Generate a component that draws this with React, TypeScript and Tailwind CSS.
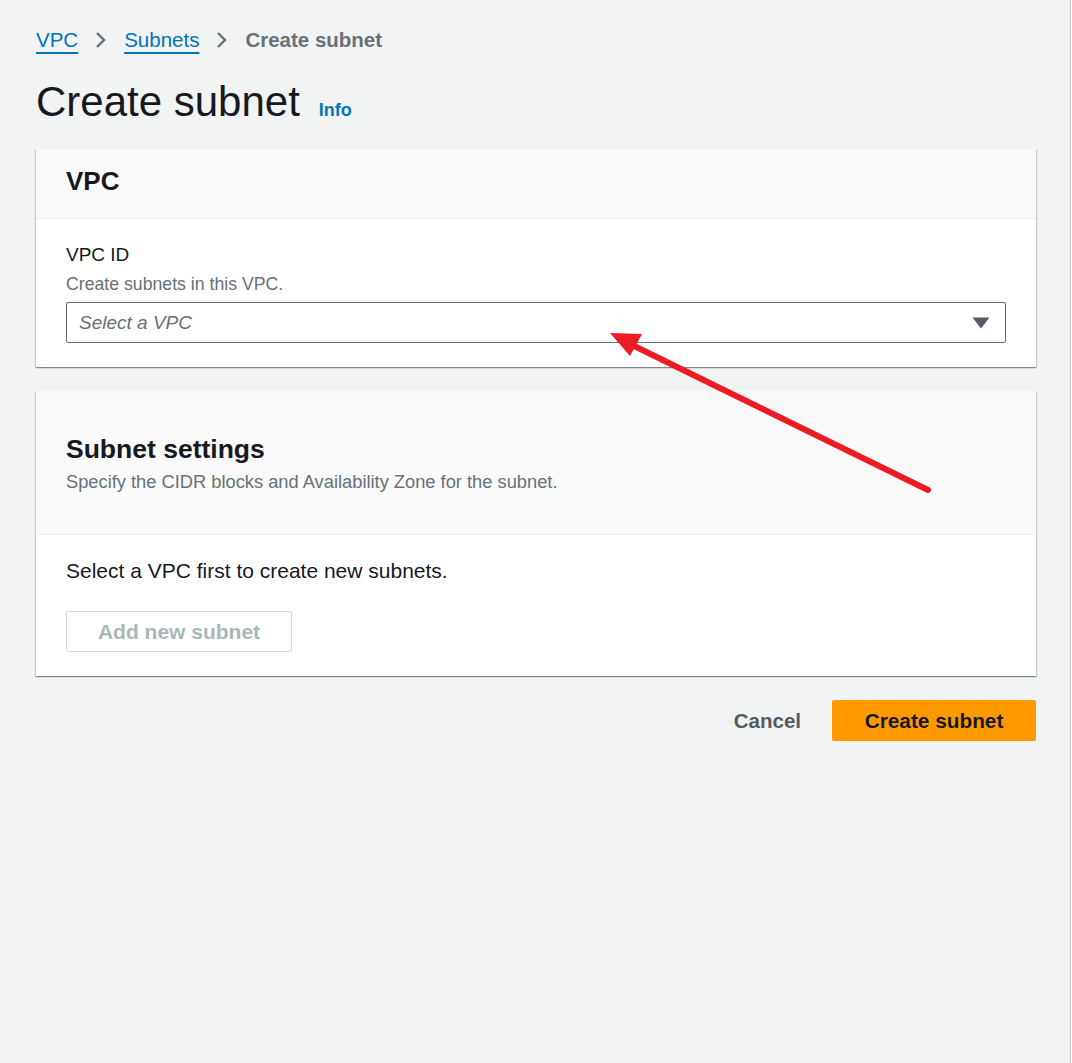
import React from 'react'

const panelShadow =
  'shadow-[0_1px_1px_0_rgba(0,28,36,0.3),1px_1px_1px_0_rgba(0,28,36,0.15),-1px_1px_1px_0_rgba(0,28,36,0.15)]'

function Chevron() {
  return (
    <svg width="12" height="18" viewBox="0 0 12 18" className="mx-[17px] shrink-0">
      <path d="M2 2l7 7-7 7" fill="none" stroke="#687078" strokeWidth="2.4" />
    </svg>
  )
}

export default function App() {
  return (
    <div className="relative min-h-[1063px] w-full bg-white font-['Liberation_Sans',Arial,sans-serif] text-[#16191f]">
      <div className="min-h-[1063px] w-[1071px] border-r border-[#c6c8c8] bg-[#f2f3f3] pl-9 pt-[26px]">
        {/* Breadcrumb */}
        <nav className="flex h-[28px] items-center text-[20.5px] leading-[28px]">
          <a href="#" className="text-[#0073bb] underline decoration-[2px] underline-offset-[5px]">
            VPC
          </a>
          <Chevron />
          <a href="#" className="text-[#0073bb] underline decoration-[2px] underline-offset-[5px]">
            Subnets
          </a>
          <Chevron />
          <span className="font-bold text-[#687078]">Create subnet</span>
        </nav>

        {/* Title */}
        <div className="mt-[22px] flex items-baseline gap-[19px]">
          <h1 className="text-[42px] leading-[52px] font-normal text-[#16191f]">Create subnet</h1>
          <a href="#" className="text-[18px] font-bold text-[#0073bb]">
            Info
          </a>
        </div>

        {/* VPC panel */}
        <section className={`mt-[21px] w-[1000px] bg-white ${panelShadow}`}>
          <div className="border-b border-[#eaeded] bg-[#fafafa] px-[30px] pt-[16px] pb-[21px]">
            <h2 className="text-[26px] leading-[32px] font-bold">VPC</h2>
          </div>
          <div className="px-[30px] pt-[24px] pb-[24px]">
            <div className="text-[19px] leading-[24px]">VPC ID</div>
            <div className="mt-[6px] text-[17.7px] leading-[22px] text-[#687078]">Create subnets in this VPC.</div>
            <div className="mt-[7px] flex h-[41px] items-center justify-between rounded-[2px] border border-[#687078] bg-white pr-[15px] pl-[12px]">
              <span className="pt-[2px] text-[19px] italic text-[#687078]">Select a VPC</span>
              <svg width="18" height="12" viewBox="0 0 18 12">
                <path d="M0.5 0.5h17L9 11.5z" fill="#545b64" />
              </svg>
            </div>
          </div>
        </section>

        {/* Subnet settings panel */}
        <section className={`mt-[24px] w-[1000px] bg-white ${panelShadow}`}>
          <div className="border-b border-[#eaeded] bg-[#fafafa] px-[30px] pt-[41px] pb-[40px]">
            <h2 className="text-[26.5px] leading-[34px] font-bold">Subnet settings</h2>
            <p className="mt-[4px] text-[18.3px] leading-[24px] text-[#687078]">
              Specify the CIDR blocks and Availability Zone for the subnet.
            </p>
          </div>
          <div className="px-[30px] pt-[23px] pb-[24px]">
            <p className="text-[21px] leading-[26px]">Select a VPC first to create new subnets.</p>
            <button
              disabled
              className="mt-[27px] h-[41px] w-[226px] rounded-[2px] border border-[#d5dbdb] bg-white pt-[1px] text-[21px] font-bold text-[#aab7b8]"
            >
              Add new subnet
            </button>
          </div>
        </section>

        {/* Actions */}
        <div className="mt-[24px] flex w-[1000px] items-center justify-end gap-[11px]">
          <button className="h-[41px] px-5 pt-[1px] text-[20.5px] font-bold text-[#545b64]">Cancel</button>
          <button className="h-[41px] w-[204px] rounded-[2px] bg-[#ff9900] pt-[1px] text-[20.8px] font-bold text-[#16191f]">
            Create subnet
          </button>
        </div>
      </div>

      {/* Annotation arrow */}
      <svg
        className="pointer-events-none absolute top-0 left-0"
        width="1072"
        height="1063"
        viewBox="0 0 1072 1063"
      >
        <line x1="624" y1="341" x2="928" y2="490" stroke="#ec1c24" strokeWidth="6" strokeLinecap="round" />
        <polygon points="610,333 642,334 630,356" fill="#ec1c24" />
      </svg>
    </div>
  )
}
